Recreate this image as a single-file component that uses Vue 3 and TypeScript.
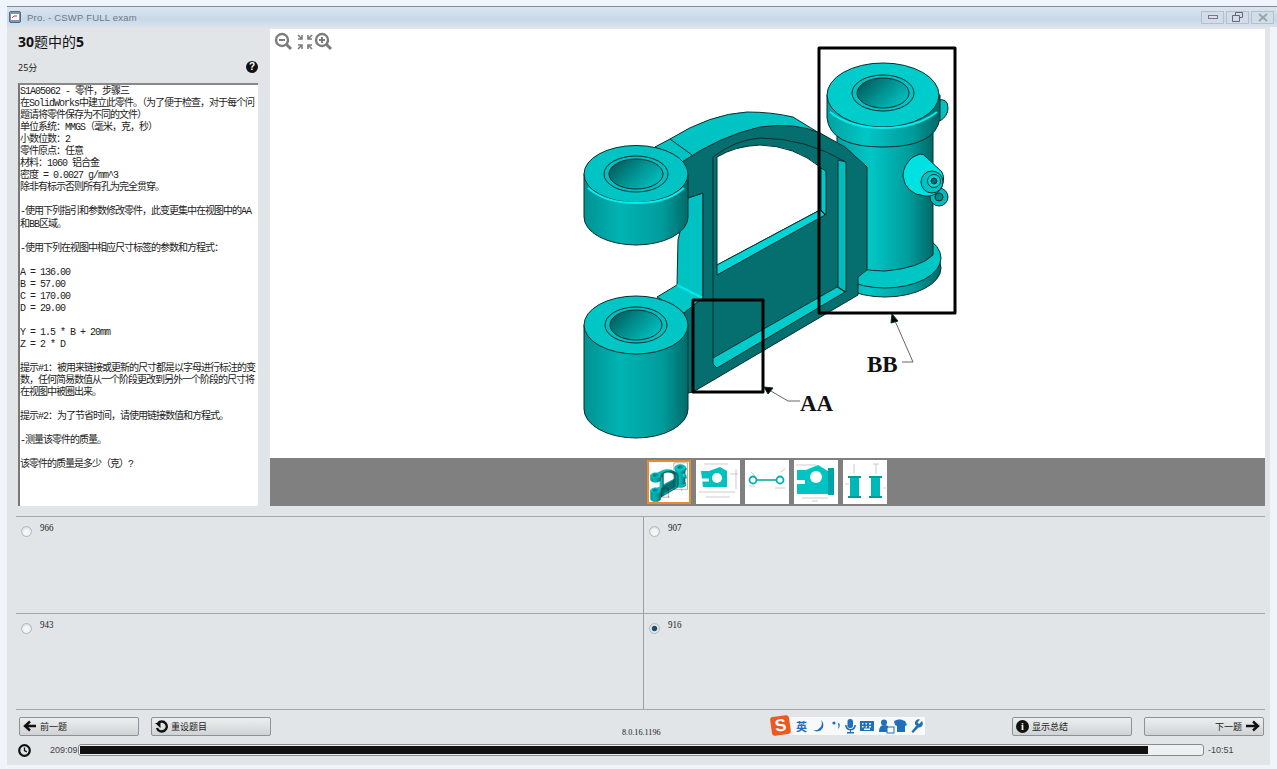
<script setup lang="ts">
const questionLines: string[] = [
  'S1A05062 - 零件，步骤三',
  '在SolidWorks中建立此零件。（为了便于检查，对于每个问',
  '题请将零件保存为不同的文件）',
  '单位系统：MMGS（毫米，克，秒）',
  '小数位数：2',
  '零件原点：任意',
  '材料：1060 铝合金',
  '密度 = 0.0027 g/mm^3',
  '除非有标示否则所有孔为完全贯穿。',
  '',
  '-使用下列指引和参数修改零件，此变更集中在视图中的AA',
  '和BB区域。',
  '',
  '-使用下列在视图中相应尺寸标签的参数和方程式：',
  '',
  'A = 136.00',
  'B = 57.00',
  'C = 170.00',
  'D = 29.00',
  '',
  'Y = 1.5 * B + 20mm',
  'Z = 2 * D',
  '',
  '提示#1：被用来链接或更新的尺寸都是以字母进行标注的变',
  '数，任何简易数值从一个阶段更改到另外一个阶段的尺寸将',
  '在视图中被圈出来。',
  '',
  '提示#2：为了节省时间，请使用链接数值和方程式。',
  '',
  '-测量该零件的质量。',
  '',
  '该零件的质量是多少（克）?'
]

const answers = [
  { value: '966', checked: false },
  { value: '907', checked: false },
  { value: '943', checked: false },
  { value: '916', checked: true }
]

const progress = 95.2
</script>

<template>
  <div class="frame">
    <header class="titlebar">
      <svg class="app-icon" width="12" height="12" viewBox="0 0 12 12">
        <rect x="0.5" y="0.5" width="11" height="11" rx="1.5" fill="#7f97b5" stroke="#4f6a8a" />
        <rect x="2" y="3" width="8" height="6" fill="#fff" />
        <path d="M3 7l2-2h3" stroke="#c0392b" fill="none" />
      </svg>
      <span class="title">Pro. - CSWP FULL exam</span>
      <div class="win-btns">
        <span class="win-btn"><i class="win-min"></i></span>
        <span class="win-btn">
          <svg width="11" height="10" viewBox="0 0 11 10"><path d="M3.5 3V.5h7v5H8M.5 3.5h7v6h-7z" fill="none" stroke="#667" /></svg>
        </span>
        <span class="win-btn">
          <svg width="10" height="9" viewBox="0 0 10 9"><path d="M1 1l8 7M9 1L1 8" stroke="#9aa4ae" stroke-width="2" /></svg>
        </span>
      </div>
    </header>

    <main class="client">
      <section class="top">
        <aside class="question">
          <h1 class="heading"><b>30</b>题中的<b>5</b></h1>
          <div class="score">
            <span>25分</span>
            <span class="help">?</span>
          </div>
          <div class="question-text">
            <div v-for="(line, i) in questionLines" :key="i" class="q-line">{{ line }}</div>
          </div>
        </aside>

        <div class="viewer">
          <div class="canvas">
            <svg class="drawing" viewBox="270 29 995 429" width="995" height="429">
              <defs>
                <linearGradient id="sideL" x1="0" x2="1" y1="0" y2="0">
                  <stop offset="0" stop-color="#009292" />
                  <stop offset="0.35" stop-color="#00b4b4" />
                  <stop offset="0.75" stop-color="#009c9c" />
                  <stop offset="1" stop-color="#006a6a" />
                </linearGradient>
                <linearGradient id="bodyG" x1="0" x2="1" y1="0" y2="0">
                  <stop offset="0" stop-color="#00a2a2" />
                  <stop offset="0.35" stop-color="#00c6c6" />
                  <stop offset="0.75" stop-color="#009c9c" />
                  <stop offset="1" stop-color="#006868" />
                </linearGradient>
                <linearGradient id="holeG" x1="0" x2="1" y1="0" y2="0.6">
                  <stop offset="0" stop-color="#004f4f" />
                  <stop offset="0.55" stop-color="#00908f" />
                  <stop offset="1" stop-color="#00bcbc" />
                </linearGradient>
                <g id="part" stroke="#042e2e" stroke-width="1" stroke-linejoin="round">
                  <!-- arch band -->
                  <path d="M655 147L670 139Q710 114 747 112Q772 112 793 117L850 152L867 167L682 162Z" fill="#00c4c4" />
                  <path d="M670 139L692 155" fill="none" />
                  <!-- light faces between the bosses -->
                  <path d="M688 198L703 193V298L677 285L678 240Z" fill="#00c2c2" />
                  <path d="M657 297L677 285L703 298L684 313Z" fill="#00c8c8" />
                  <path d="M677 285L703 298" stroke="#00eeee" stroke-width="2" />

                  <!-- lower flange -->
                  <ellipse cx="885" cy="268" rx="56" ry="29" fill="url(#bodyG)" />
                  <ellipse cx="885" cy="258" rx="56" ry="30" fill="#00c6c6" />
                  <!-- body -->
                  <path d="M837 130H933V255Q920 268 885 271Q860 271 837 262Z" fill="url(#bodyG)" />
                  <!-- top right lug behind the flange -->
                  <path d="M938 100Q948 98 948 108Q948 116 940 121Z" fill="#00c0c0" />

                  <!-- web -->
                  <path d="M682 162Q720 136 760 127Q795 122 820 133L845 147L867 167V270L858 277V295L693 392L688 393L684 313L703 298V193L688 198Z" fill="#056f6f" />
                  <!-- pocket rim -->
                  <path d="M713 358L837 287L845 292L717 368L713 364Z" fill="#00cccc" />
                  <path d="M838 160L846 162V292L838 287Z" fill="#00bcbc" />
                  <path d="M713 358V157Q735 140 760 138Q805 138 846 162" fill="none" />
                  <!-- window -->
                  <path d="M717 157Q735 146 760 145Q795 146 820 167V210L717 265Z" fill="#fff" />
                  <path d="M717 265L820 210L825 215L717 275Z" fill="#00d4d4" />
                  <path d="M821 168L826 171V215L821 210Z" fill="#00c8c8" />

                  <!-- top flange -->
                  <path d="M827 95V118Q830 147 883 147Q936 147 940 118V95Z" fill="url(#bodyG)" />
                  <ellipse cx="883" cy="95" rx="56" ry="32" fill="#00cccc" />
                  <path d="M830 112Q850 128 883 128Q916 128 937 112" fill="none" stroke="#00eeee" stroke-width="2" />
                  <ellipse cx="883" cy="93" rx="31" ry="18" fill="#00c4c4" />
                  <ellipse cx="883" cy="93" rx="26" ry="15" fill="url(#holeG)" />

                  <!-- side lugs -->
                  <circle cx="939" cy="197" r="9" fill="#00bcbc" />
                  <circle cx="939" cy="197" r="4" fill="#008787" />
                  <path d="M903 176Q903 165 913 157L920 154Q924 154 926 157L942 172Q946 180 940 190Q934 197 925 196Q905 194 903 176Z" fill="#00e2e2" />
                  <circle cx="932" cy="182" r="11" fill="#00c4c4" />
                  <circle cx="934" cy="181" r="6.5" fill="#00dcdc" />
                  <circle cx="934" cy="181" r="3" fill="#006a6a" />

                  <!-- upper left boss -->
                  <path d="M584 174V217A52 28 0 0 0 688 217V174Z" fill="url(#sideL)" />
                  <ellipse cx="636" cy="174" rx="52" ry="28.5" fill="#00c4c4" />
                  <path d="M588 188Q605 203 636 203Q668 203 684 188" fill="none" stroke="#00eeee" stroke-width="2" />
                  <ellipse cx="636" cy="174" rx="32" ry="18" fill="#00c0c0" />
                  <ellipse cx="636" cy="174" rx="27" ry="15" fill="url(#holeG)" />

                  <!-- lower left boss -->
                  <path d="M584 325V409A52 29 0 0 0 688 409V325Z" fill="url(#sideL)" />
                  <ellipse cx="636" cy="325" rx="52" ry="29" fill="#00c6c6" />
                  <ellipse cx="636" cy="325" rx="31" ry="18" fill="#00c0c0" />
                  <ellipse cx="636" cy="325" rx="26" ry="15" fill="url(#holeG)" />

                  <!-- callout boxes -->
                  <rect x="693" y="300" width="70" height="92" fill="none" stroke="#000" stroke-width="3" />
                  <rect x="819" y="48" width="136" height="265" fill="none" stroke="#000" stroke-width="3" />
                  <path d="M764 387L788 401H800" fill="none" stroke="#666" />
                  <path d="M892 314L913 362H902" fill="none" stroke="#666" />
                  <path d="M764 387l9 1-5 6zM892 314l6 7-7 2z" fill="#000" />
                </g>
              </defs>
              <use href="#part" />
              <text x="800" y="411" class="callout">AA</text>
              <text x="867" y="372" class="callout">BB</text>
            </svg>

            <div class="zoom-tools">
              <svg width="60" height="20" viewBox="0 0 60 20" fill="none" stroke="#7c7c7c">
                <circle cx="8" cy="8" r="6" stroke-width="2.4" />
                <path d="M12.5 12.5L17 17" stroke-width="3" />
                <path d="M5 8h6" stroke-width="2" />
                <path d="M24 3l4 4M28 3v4h-4M38 3l-4 4M34 3v4h4M24 17l4-4M28 17v-4h-4M38 17l-4-4M34 17v-4h4" stroke-width="1.6" />
                <circle cx="48" cy="8" r="6" stroke-width="2.4" />
                <path d="M52.5 12.5L57 17" stroke-width="3" />
                <path d="M45 8h6M48 5v6" stroke-width="2" />
              </svg>
            </div>
          </div>

          <div class="strip">
            <div class="thumb thumb-active">
              <svg viewBox="570 40 400 400" width="40" height="40"><use href="#part" /></svg>
            </div>
            <div class="thumb">
              <svg viewBox="0 0 44 44" width="44" height="44">
                <path d="M5 11h8L24 7l7 4v16H7z" fill="#00c0c0" />
                <circle cx="21" cy="18" r="5" fill="#fff" />
                <path d="M5 20h8" stroke="#fff" stroke-width="3" />
                <path d="M8 4h24M3 32h36M40 9v20M10 37h24M34 14h8" stroke="#999" stroke-width="0.5" fill="none" />
              </svg>
            </div>
            <div class="thumb">
              <svg viewBox="0 0 44 44" width="44" height="44">
                <path d="M11 20h22" stroke="#00a0a0" stroke-width="1.500" />
                <circle cx="8" cy="20" r="3.500" fill="#fff" stroke="#00b0b0" stroke-width="1.800" />
                <circle cx="35" cy="20" r="3.500" fill="#fff" stroke="#00b0b0" stroke-width="1.800" />
                <path d="M6 12l4 4M36 12l4-3M30 28h10M4 26h6" stroke="#999" stroke-width="0.5" />
              </svg>
            </div>
            <div class="thumb">
              <svg viewBox="0 0 44 44" width="44" height="44">
                <path d="M3 10h9l12-5 10 6v23H3z" fill="#00c4c4" />
                <path d="M34 8h6v27h-6z" fill="#00a4a4" />
                <circle cx="22" cy="17" r="6" fill="#fff" />
                <path d="M3 22h8" stroke="#fff" stroke-width="4" />
                <path d="M2 5h20M8 38h26M18 41h6" stroke="#999" stroke-width="0.5" />
              </svg>
            </div>
            <div class="thumb">
              <svg viewBox="0 0 44 44" width="44" height="44">
                <path d="M7 17h9v20H7zM28 17h9v20H28z" fill="#00b8b8" />
                <path d="M5 17h13M26 17h13M5 37h13M26 37h13" stroke="#009c9c" stroke-width="2" />
                <path d="M11 4v10M30 4h6M33 4v10M2 24h4M40 28h3" stroke="#999" stroke-width="0.5" />
              </svg>
            </div>
          </div>
        </div>
      </section>

      <section class="answers">
        <label v-for="a in answers" :key="a.value" class="answer">
          <span class="radio" :class="{ checked: a.checked }"></span>
          <span class="answer-text">{{ a.value }}</span>
        </label>
      </section>

      <section class="actions">
        <button class="btn">
          <svg width="14" height="12" viewBox="0 0 14 12"><path d="M13 6H3M7 1.5L2 6l5 4.5" fill="none" stroke="#111" stroke-width="2.4" /></svg>
          前一题
        </button>
        <button class="btn">
          <svg width="13" height="13" viewBox="0 0 13 13"><path d="M3 3.2A5 5 0 1 1 2 8" fill="none" stroke="#111" stroke-width="2.4" /><path d="M0 3h5.5v5z" fill="#111" /></svg>
          重设题目
        </button>
        <span class="version">8.0.16.1196</span>
        <div class="actions-right">
          <button class="btn">
            <span class="info">i</span>
            显示总结
          </button>
          <button class="btn btn-next">
            下一题
            <svg width="15" height="12" viewBox="0 0 15 12"><path d="M1 6h11M8 1.5L13 6l-5 4.5" fill="none" stroke="#111" stroke-width="2.4" /></svg>
          </button>
        </div>

        <div class="ime">
          <span class="ime-logo"><b>S</b></span>
          <span class="ime-lang">英</span>
          <svg width="116" height="16" viewBox="0 0 116 16" fill="#1f6fbb">
            <path transform="translate(2)" d="M10 2a6 6 0 0 1-8 10 7 7 0 0 0 8-10z" />
            <circle cx="25" cy="5" r="1.6" /><path d="M30 5q2 3-1 6 1-3 0-6z" />
            <path transform="translate(-5)" d="M46 1a2.5 2.5 0 0 1 3 2.5v5a3 3 0 0 1-5.500 0v-5A2.500 2.500 0 0 1 46 1zM41 7h1.500q1 4 4 4t4-4H52q-.5 5-5 5.500V14h3v1.500h-7V14h3v-1.500Q41.500 12 41 7z" />
            <path transform="translate(-8)" d="M59 3h14v10H59zM61 5v1.500h1.500V5zM64.500 5v1.500H66V5zM68 5v1.500h2V5zM61 8v1.500h1.500V8zM64.500 8v1.500H66V8zM68 8v1.500h2V8zM63 10.500V12h6v-1.500z" fill-rule="evenodd" />
            <g transform="translate(-9)">
              <circle cx="84" cy="4.500" r="3" /><path d="M79 14q0-7 5-7t4 3h-1v4z" /><rect x="87" y="9" width="7" height="6" fill="none" stroke="#1f6fbb" />
            </g>
            <path transform="translate(-13)" d="M98 3l4-1.500h3L109 3l2 4-2 1v6h-8V8l-2-1z" />
            <path transform="translate(-2.500 -.5)" d="M115.500 3.500l-3 3-1.500-1.500 2.500-3a4 4 0 0 0-5 5L110 8l-1 1-4 5 1.500 1.500L112 10a4 4 0 0 0 3.500-6.500z" />
          </svg>
        </div>
      </section>

      <section class="timer">
        <svg width="13" height="13" viewBox="0 0 13 13"><circle cx="6.500" cy="6.500" r="5.300" fill="none" stroke="#111" stroke-width="2.200" /><path d="M6.500 3.500v3.200l2.300 1.200" fill="none" stroke="#111" stroke-width="1.300" /></svg>
        <span class="time-left">209:09</span>
        <div class="bar"><div class="bar-fill" :style="{ width: progress + '%' }"></div></div>
        <span class="time-over">-10:51</span>
      </section>
    </main>
  </div>
</template>

<style>
body {
  margin: 0;
  background: #eff5fa;
}
</style>

<style scoped>
.frame {
  box-sizing: border-box;
  width: 1277px;
  height: 769px;
  padding-top: 6px;
  display: flex;
  flex-direction: column;
  overflow: hidden;
  background: #eff5fa;
  font-family: "Noto Sans", "Noto Sans CJK SC", sans-serif;
  color: #222;
}

/* title bar */
.titlebar {
  height: 20px;
  margin-left: 7px;
  padding-left: 2px;
  display: flex;
  align-items: center;
  gap: 6px;
  border-top: 1px solid #7f8a96;
  background: linear-gradient(#dbe5ef, #c8d8e8 60%, #d8e2ec);
}
.title {
  font-size: 9.5px;
  color: #6d7985;
  font-family: "Liberation Sans", sans-serif;
  letter-spacing: 0.2px;
}
.win-btns {
  margin-left: auto;
  margin-right: 3px;
  display: flex;
  gap: 2px;
}
.win-btn {
  width: 21px;
  height: 11px;
  display: flex;
  align-items: center;
  justify-content: center;
  border: 1px solid #b4c0cc;
  background: #d2dde8;
}
.win-min {
  display: block;
  width: 8px;
  height: 2px;
  border: 1px solid #778;
  background: #dde;
}

.client {
  flex: 1;
  margin: 0 7px 4px;
  position: relative;
  display: flex;
  flex-direction: column;
  background: #e1e5e8;
}

/* question + viewer */
.top {
  height: 477px;
  margin-top: 2px;
  padding: 0 5px 0 11px;
  display: flex;
  gap: 12px;
}
.question {
  width: 240px;
  display: flex;
  flex-direction: column;
}
.heading {
  margin: 3px 0 0;
  font-size: 14px;
  line-height: 20px;
  font-weight: 400;
  color: #111;
}
.heading b {
  font-weight: 700;
}
.score {
  margin-top: 8px;
  height: 14px;
  display: flex;
  align-items: center;
  justify-content: space-between;
  font-size: 9px;
}
.help {
  width: 12px;
  height: 12px;
  border-radius: 50%;
  background: #111;
  color: #fff;
  font-size: 10px;
  font-weight: 700;
  line-height: 12px;
  text-align: center;
  font-family: "Liberation Sans", sans-serif;
}
.question-text {
  margin-top: 9px;
  flex: 1;
  padding: 1px 0 0 0;
  background: #fff;
  border-left: 2px solid #777;
  border-top: 2px solid #888;
  font-family: "Liberation Mono", "Noto Sans CJK SC", monospace;
  font-size: 10px;
  line-height: 12.05px;
  color: #222;
  overflow: hidden;
}
.q-line {
  height: 12.05px;
  white-space: pre;
  letter-spacing: -1px;
}

.viewer {
  width: 995px;
  display: flex;
  flex-direction: column;
  background: #fff;
}
.canvas {
  position: relative;
  height: 429px;
}
.drawing {
  display: block;
}
.callout {
  font-family: "Liberation Serif", serif;
  font-size: 23px;
  font-weight: 700;
  fill: #111;
}
.zoom-tools {
  position: absolute;
  left: 4px;
  top: 3px;
}
.strip {
  flex: 1;
  background: #808080;
  display: flex;
  align-items: center;
  justify-content: center;
  gap: 5px;
  padding-right: 2px;
}
.thumb {
  width: 44px;
  height: 44px;
  background: #fff;
  display: flex;
  align-items: center;
  justify-content: center;
}
.thumb-active {
  box-sizing: border-box;
  border: 2px solid #e98b2e;
}

/* answers */
.answers {
  margin: 10px 5px 0 9px;
  height: 192px;
  display: grid;
  grid-template-columns: 628px 621px;
  grid-template-rows: 96px 96px;
  border-top: 1px solid #a2a8ac;
  border-bottom: 1px solid #a2a8ac;
}
.answer {
  box-sizing: border-box;
  padding: 7px 0 0 5px;
  display: flex;
  align-items: flex-start;
  gap: 8px;
}
.answer:nth-child(odd) {
  border-right: 1px solid #9aa0a4;
}
.answer:nth-child(n + 3) {
  border-top: 1px solid #a2a8ac;
}
.radio {
  width: 9px;
  height: 9px;
  margin-top: 2px;
  border-radius: 50%;
  border: 1px solid #b4b8bb;
  background: radial-gradient(circle at 50% 60%, #f4f5f6 40%, #c6cacd);
}
.radio.checked {
  background: radial-gradient(circle, #1d4f6f 35%, #dfe7ec 50%);
}
.answer-text {
  margin-top: -2px;
  font-family: "Liberation Serif", serif;
  font-size: 10px;
  line-height: 11px;
  transform: scaleX(0.9);
  transform-origin: left;
}

/* bottom actions */
.actions {
  position: relative;
  margin-top: 6px;
  padding: 0 6px 0 12px;
  display: flex;
  align-items: center;
  gap: 12px;
  height: 20px;
}
.btn {
  width: 120px;
  height: 19px;
  padding: 0 3px;
  display: flex;
  align-items: center;
  gap: 3px;
  border: 1px solid #8c9296;
  border-radius: 2px;
  background: linear-gradient(#eceeef, #d0d3d5);
  font-family: "Noto Sans CJK SC", sans-serif;
  font-size: 9px;
  color: #222;
}
.btn-next {
  justify-content: flex-end;
}
.info {
  width: 13px;
  height: 13px;
  border-radius: 50%;
  background: #111;
  color: #fff;
  font: 700 10px/13px "Liberation Serif", serif;
  text-align: center;
}
.version {
  margin-left: 339px;
  margin-top: 12px;
  font-family: "Liberation Serif", serif;
  font-size: 8.2px;
  color: #222;
}
.actions-right {
  margin-left: auto;
  display: flex;
  gap: 12px;
}
.ime {
  position: absolute;
  left: 778px;
  top: 1px;
  width: 129px;
  height: 18px;
  padding-left: 11px;
  display: flex;
  align-items: center;
  background: #f7f9fb;
}
.ime-logo {
  position: absolute;
  left: -14px;
  top: -1px;
  width: 19px;
  height: 19px;
  border-radius: 3px;
  background: #ea5a22;
  color: #fff;
  font: 700 17px/19px "Liberation Sans", sans-serif;
  text-align: center;
  transform: rotate(-8deg);
}
.ime-lang {
  margin-right: 2px;
  font-size: 11px;
  font-weight: 700;
  color: #1f6fbb;
  font-family: "Noto Sans CJK SC", sans-serif;
}

/* timer */
.timer {
  margin-top: 8px;
  padding-left: 11px;
  height: 12px;
  display: flex;
  align-items: center;
  font-family: "Liberation Sans", sans-serif;
  font-size: 9px;
  color: #444;
}
.time-left {
  margin-left: 19px;
  width: 28px;
}
.bar {
  box-sizing: border-box;
  width: 1126px;
  height: 12px;
  padding: 1px;
  border: 1px solid #8a8a8a;
  border-radius: 3px;
  background: #eef0f1;
}
.bar-fill {
  height: 100%;
  background: #111;
}
.time-over {
  margin-left: 4px;
}
</style>
